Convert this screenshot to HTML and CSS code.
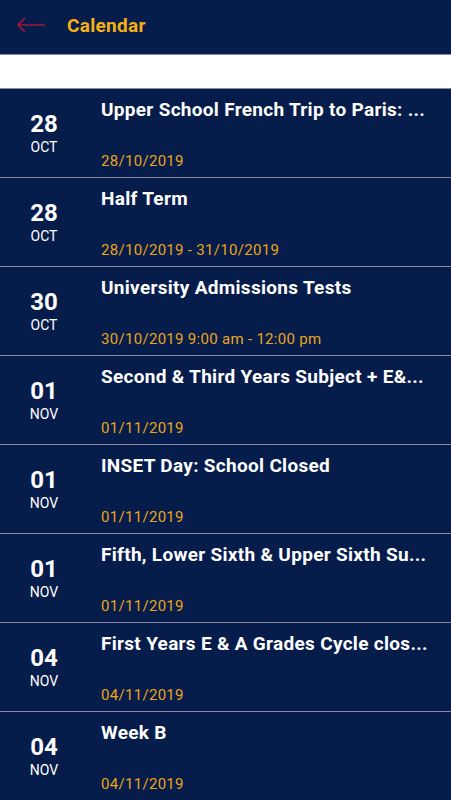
FILE: index.html
```html
<!DOCTYPE html>
<html>
<head>
<meta charset="utf-8">
<link rel="stylesheet" href="styles.css">
</head>
<body>
<header class="topbar">
  <svg class="back" width="30" height="16" viewBox="0 0 30 16"><path d="M29 8H2M9 1L2 8l7 7" fill="none" stroke="#a3173c" stroke-width="1.6"/></svg>
  <h1 class="title">Calendar</h1>
</header>
<div class="search"></div>
<ul class="list">
  <li class="event"><div class="when"><span class="day">28</span><span class="mon">OCT</span></div><div class="info"><div class="name">Upper School French Trip to Paris: ...</div><div class="date">28/10/2019</div></div></li>
  <li class="event"><div class="when"><span class="day">28</span><span class="mon">OCT</span></div><div class="info"><div class="name">Half Term</div><div class="date">28/10/2019 - 31/10/2019</div></div></li>
  <li class="event"><div class="when"><span class="day">30</span><span class="mon">OCT</span></div><div class="info"><div class="name">University Admissions Tests</div><div class="date">30/10/2019 9:00 am - 12:00 pm</div></div></li>
  <li class="event"><div class="when"><span class="day">01</span><span class="mon">NOV</span></div><div class="info"><div class="name">Second &amp; Third Years Subject + E&amp;...</div><div class="date">01/11/2019</div></div></li>
  <li class="event"><div class="when"><span class="day">01</span><span class="mon">NOV</span></div><div class="info"><div class="name">INSET Day: School Closed</div><div class="date">01/11/2019</div></div></li>
  <li class="event"><div class="when"><span class="day">01</span><span class="mon">NOV</span></div><div class="info"><div class="name">Fifth, Lower Sixth &amp; Upper Sixth Su...</div><div class="date">01/11/2019</div></div></li>
  <li class="event"><div class="when"><span class="day">04</span><span class="mon">NOV</span></div><div class="info"><div class="name">First Years E &amp; A Grades Cycle clos...</div><div class="date">04/11/2019</div></div></li>
  <li class="event"><div class="when"><span class="day">04</span><span class="mon">NOV</span></div><div class="info"><div class="name">Week B</div><div class="date">04/11/2019</div></div></li>
</ul>
</body>
</html>
```
FILE: styles.css
```css
* { box-sizing: border-box; }
html, body { margin: 0; padding: 0; }
body {
  background: #061c4a;
  font-family: Roboto, "Liberation Sans", sans-serif;
  width: 451px;
  height: 800px;
  overflow: hidden;
}
.topbar {
  height: 54px;
  display: flex;
  align-items: center;
  padding-left: 16px;
  background: #061c4a;
}
.back { display: block; margin-top: -4px; }
.title {
  margin: -4px 0 0 21px;
  font-size: 19px;
  font-weight: 700;
  letter-spacing: 0.3px;
  color: #f5b014;
}
.search {
  height: 35px;
  background: #fff;
  border-top: 1px solid #8c8aa6;
  border-bottom: 1px solid #8c8aa6;
}
.list { list-style: none; margin: 0; padding: 0; }
.event {
  height: 89px;
  display: flex;
  border-bottom: 1px solid #8c8aa6;
}
.when {
  width: 88px;
  display: flex;
  flex-direction: column;
  align-items: center;
  justify-content: center;
  color: #fff;
  padding-top: 1px;
}
.day { font-size: 24px; font-weight: 700; line-height: 27px; }
.mon { font-size: 14px; line-height: 18px; }
.info {
  flex: 1;
  min-width: 0;
  padding: 8px 8px 6px 13px;
  display: flex;
  flex-direction: column;
  justify-content: space-between;
}
.name {
  color: #fff;
  font-size: 19px;
  font-weight: 700;
  letter-spacing: 0.3px;
  line-height: 26px;
  white-space: nowrap;
  overflow: hidden;
}
.date {
  color: #eba51b;
  font-size: 15px;
  letter-spacing: 0.3px;
  line-height: 20px;
}
```
